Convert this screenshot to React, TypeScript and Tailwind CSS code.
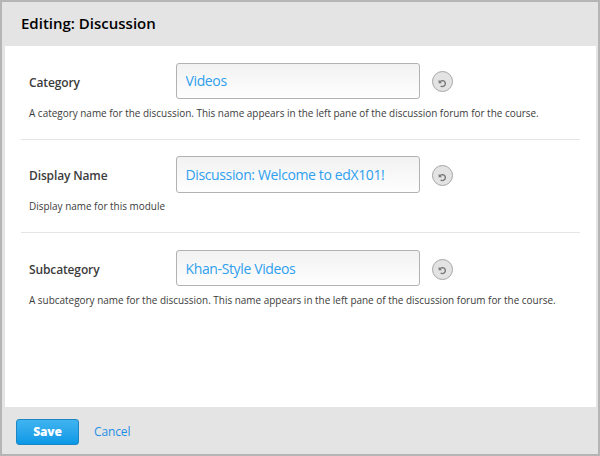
type Setting = { label: string; value: string; help: string };

const settings: Setting[] = [
  {
    label: "Category",
    value: "Videos",
    help: "A category name for the discussion. This name appears in the left pane of the discussion forum for the course.",
  },
  {
    label: "Display Name",
    value: "Discussion: Welcome to edX101!",
    help: "Display name for this module",
  },
  {
    label: "Subcategory",
    value: "Khan-Style Videos",
    help: "A subcategory name for the discussion. This name appears in the left pane of the discussion forum for the course.",
  },
];

function UndoIcon() {
  return (
    <svg className="mt-[3px] h-[9px] w-[9px]" viewBox="0 0 9 9" fill="none">
      <path d="M2 2.5C3 1.7 3.8 1.6 4.8 1.6A3 3 0 1 1 2.6 7" stroke="#777" strokeWidth="1.4" />
      <path d="M0.6 0.8V4.2H4Z" fill="#777" />
    </svg>
  );
}

function SettingRow({ label, value, help }: Setting) {
  return (
    <li className="h-[93.7px] border-b border-[#e5e5e5] pl-2 pt-[16.6px] last:border-b-0">
      <div className="flex h-[36.5px] items-center">
        <label className="w-[147px] pt-[3.4px] text-[12px] leading-4 font-semibold tracking-[-0.13px] text-[#3c3c3c]">
          {label}
        </label>
        <input
          className="h-[36.5px] w-[244px] rounded-[3px] border border-[#b2b2b2] bg-linear-to-b from-[#f2f2f2] to-[#fefefe] px-[8.5px] text-[14px] tracking-[-0.37px] text-[#2f9fee] outline-none"
          defaultValue={value}
        />
        <button
          aria-label="Reset"
          className="ml-[12px] mt-[2px] flex h-[21px] w-[21px] items-center justify-center rounded-full border border-[#a5a5a5] bg-[#e3e3e3]"
        >
          <UndoIcon />
        </button>
      </div>
      <p className="mt-[5.6px] text-[9.95px] leading-4 whitespace-nowrap text-[#3c3c3c]">{help}</p>
    </li>
  );
}

export default function App() {
  return (
    <div className="flex h-[456px] w-[600px] flex-col overflow-hidden border-2 border-[#b5b5b5] bg-[#e4e4e4] font-['Open_Sans',sans-serif]">
      <header className="flex h-[44px] shrink-0 items-center pb-[2px] pl-[19px]">
        <h1 className="text-[15px] leading-5 font-semibold text-black">Editing: Discussion</h1>
      </header>
      <main className="mr-[2px] ml-[3px] h-[361px] shrink-0 bg-white pr-[16px] pl-[16px]">
        <ul>
          {settings.map((s) => (
            <SettingRow key={s.label} {...s} />
          ))}
        </ul>
      </main>
      <footer className="flex flex-1 items-center pl-[14px]">
        <button className="mt-[2px] h-[26px] w-[63px] rounded-[3px] border border-[#1c86c4] bg-linear-to-b from-[#3fb4f0] to-[#0798e6] text-[12px] font-extrabold tracking-[-0.2px] text-white">
          Save
        </button>
        <a className="mt-[2px] ml-[15px] text-[12px] tracking-[-0.12px] text-[#1f8fe6]">Cancel</a>
      </footer>
    </div>
  );
}
